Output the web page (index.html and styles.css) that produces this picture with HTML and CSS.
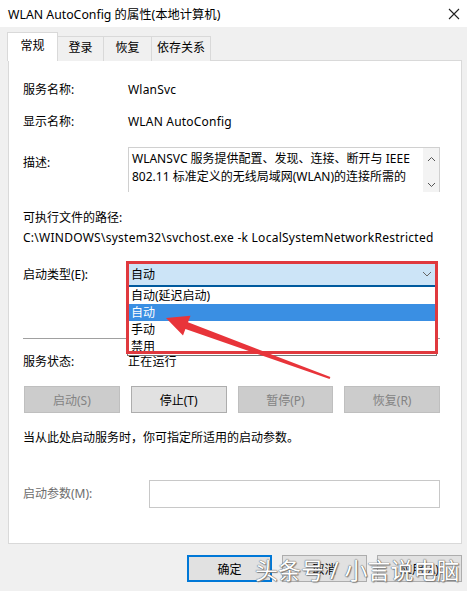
FILE: index.html
```html
<!DOCTYPE html>
<html lang="zh-CN">
<head>
  <meta charset="UTF-8" />
  <title>WLAN AutoConfig 的属性(本地计算机)</title>
  <link rel="stylesheet" href="styles.css">
</head>
<body>
  <div class="window">
    <!-- 标题栏 -->
    <div class="titlebar">
      <span class="title">WLAN AutoConfig 的属性(本地计算机)</span>
      <svg class="close" width="12" height="12" viewBox="0 0 12 12">
        <path d="M1 1L11 11M11 1L1 11" stroke="#222" stroke-width="1.1" fill="none"/>
      </svg>
    </div>

    <div class="body">
      <div class="tabs">
        <div class="tab active">常规</div>
        <div class="tab">登录</div>
        <div class="tab">恢复</div>
        <div class="tab">依存关系</div>
      </div>

      <div class="panel">
        <div class="row r-name">
          <span class="label">服务名称:</span>
          <span class="value">WlanSvc</span>
        </div>
        <div class="row r-display">
          <span class="label">显示名称:</span>
          <span class="value">WLAN AutoConfig</span>
        </div>
        <div class="row r-desc">
          <span class="label desc-label">描述:</span>
          <div class="desc-box">
            <div class="desc-text">WLANSVC 服务提供配置、发现、连接、断开与 IEEE 802.11 标准定义的无线局域网(WLAN)的连接所需的</div>
            <div class="scroll">
              <svg width="9" height="6" viewBox="0 0 9 6"><path d="M1 5L4.5 1.5L8 5" stroke="#555" fill="none"/></svg>
              <svg width="9" height="6" viewBox="0 0 9 6"><path d="M1 1L4.5 4.5L8 1" stroke="#555" fill="none"/></svg>
            </div>
          </div>
        </div>
        <div class="path-label">可执行文件的路径:</div>
        <div class="path">C:\WINDOWS\system32\svchost.exe -k LocalSystemNetworkRestricted</div>

        <div class="row r-start">
          <span class="label">启动类型(E):</span>
          <div class="combo">
            <div class="combo-box">
              <span>自动</span>
              <svg width="10" height="6" viewBox="0 0 10 6"><path d="M1 1L5 5L9 1" stroke="#666" fill="none"/></svg>
            </div>
            <ul class="combo-list">
              <li>自动(延迟启动)</li>
              <li class="selected">自动</li>
              <li>手动</li>
              <li>禁用</li>
            </ul>
            <div class="mark"></div>
          </div>
        </div>

        <hr class="sep">

        <div class="row r-status">
          <span class="label">服务状态:</span>
          <span class="value">正在运行</span>
        </div>

        <div class="actions">
          <button class="btn" disabled>启动(S)</button>
          <button class="btn">停止(T)</button>
          <button class="btn" disabled>暂停(P)</button>
          <button class="btn" disabled>恢复(R)</button>
        </div>

        <p class="hint">当从此处启动服务时，你可指定所适用的启动参数。</p>

        <div class="row r-param">
          <span class="label param-label">启动参数(M):</span>
          <div class="param-input"></div>
        </div>
      </div>

      <div class="footer">
        <button class="btn default">确定</button>
        <button class="btn">取消</button>
        <button class="btn">应用(A)</button>
      </div>
    </div>

    <!-- 标注箭头 -->
    <svg class="arrow" width="467" height="591" viewBox="0 0 467 591">
      <polygon fill="#e8343a" points="166,318 190.5,315.8 188,322.3 330.4,377 329.6,379 185.4,328.9 183,335.4"/>
    </svg>

    <div class="watermark">头条号 / 小言说电脑</div>
  </div>
</body>
</html>
```

FILE: styles.css
```css
:root {
  --gray: #f0f0f0;
  --border: #d9d9d9;
  --btn: #e1e1e1;
  --btn-border: #adadad;
  --blue: #0078d7;
  --red: #e0393e;
}

* {
  box-sizing: border-box;
}

body {
  margin: 0;
  font-family: "Noto Sans", "Noto Sans CJK SC", sans-serif;
  font-size: 12px;
  color: #000;
  background: var(--gray);
}

.window {
  position: relative;
  width: 467px;
  height: 591px;
  overflow: hidden;
  background: var(--gray);
}

.titlebar {
  height: 27px;
  background: #fff;
  display: flex;
  align-items: center;
  justify-content: space-between;
  padding: 0 7px 0 8px;
}

.title {
  font-size: 12.3px;
}

.body {
  padding: 5px 5px 0 7px;
}

.tabs {
  display: flex;
  align-items: flex-end;
  height: 29px;
  margin-bottom: -1px;
  position: relative;
  z-index: 1;
}

.tab {
  height: 25px;
  line-height: 22px;
  padding: 0;
  white-space: nowrap;
  border: 1px solid var(--border);
  border-bottom: none;
  border-left: none;
  background: var(--gray);
  text-align: center;
}

.tab:nth-child(2) { width: 46px; }
.tab:nth-child(3) { width: 48px; }
.tab:nth-child(4) { width: 59px; }

.tab.active {
  width: 51px;
  height: 29px;
  line-height: 26px;
  background: #fff;
  border-left: 1px solid var(--border);
}

.panel {
  width: 454px;
  height: 484px;
  margin-left: 1px;
  background: #fff;
  border: 1px solid var(--border);
  padding: 20px 21px 0 14px;
}

.row {
  display: flex;
  align-items: center;
}

.label {
  width: 105px;
  flex: none;
  line-height: 18px;
}

.value {
  line-height: 18px;
  letter-spacing: 0.2px;
}

.r-display { margin-top: 14px; }

.r-desc {
  margin-top: 16px;
  align-items: flex-start;
}

.desc-label { padding-top: 7px; }

.desc-box {
  width: 312px;
  height: 45px;
  border: 1px solid #d0d0d0;
  border-bottom: none;
  display: flex;
}

.desc-text {
  flex: 1;
  padding: 2px 0 0 3px;
  line-height: 18px;
}

.scroll {
  width: 16px;
  display: flex;
  flex-direction: column;
  justify-content: space-between;
  align-items: center;
  padding: 8px 0 4px;
  background: #f3f3f3;
}

.path-label {
  margin-top: 17px;
  line-height: 18px;
}

.path {
  margin-top: 2px;
  line-height: 18px;
  white-space: nowrap;
  letter-spacing: 0.26px;
}

.r-start { margin-top: 16px; }

.combo {
  position: relative;
  width: 310px;
  margin-left: -1px;
  z-index: 2;
}

.combo-box {
  height: 24px;
  background: #cce4f7;
  border-bottom: 2px solid #005a9e;
  display: flex;
  align-items: center;
  justify-content: space-between;
  padding: 0 5px 0 4px;
}

.combo-list {
  position: absolute;
  left: 0;
  top: 24px;
  width: 310px;
  margin: 0;
  padding: 0;
  list-style: none;
  background: #fff;
  border: 1px solid #767676;
  border-top: none;
}

.combo-list li {
  height: 17px;
  line-height: 17px;
  padding-left: 3px;
}

.combo-list li.selected {
  background: #3a8fe3;
  color: #fff;
}

.mark {
  position: absolute;
  left: -1px;
  top: -2px;
  width: 312px;
  height: 93px;
  border: 3px solid var(--red);
  pointer-events: none;
}

.sep {
  margin: 51px 0 0;
  border: none;
  border-top: 1px solid #a0a0a0;
}

.r-status { margin-top: 14px; }

.actions {
  display: grid;
  grid-template-columns: repeat(4, 1fr);
  column-gap: 11px;
  margin-top: 15px;
  padding-left: 1px;
}

.btn {
  height: 27px;
  font-family: inherit;
  font-size: 12px;
  color: #000;
  background: var(--btn);
  border: 1px solid var(--btn-border);
  padding: 0;
}

.btn:disabled {
  background: #cccccc;
  border-color: #bfbfbf;
  color: #838383;
}

.hint {
  margin: 16px 0 0;
  line-height: 18px;
}

.r-param { margin-top: 33px; }

.param-label {
  width: 126px;
  color: #6d6d6d;
}

.param-input {
  width: 291px;
  height: 28px;
  border: 1px solid #c8c8c8;
}

.footer {
  display: flex;
  justify-content: flex-end;
  gap: 10px;
  margin-top: 11px;
}

.footer .btn {
  width: 85px;
}

.footer .btn.default {
  border: 2px solid var(--blue);
}

.arrow {
  position: absolute;
  left: 0;
  top: 0;
  z-index: 5;
  pointer-events: none;
}

.watermark {
  position: absolute;
  left: 255px;
  top: 555px;
  z-index: 6;
  font-size: 23px;
  line-height: 30px;
  color: #fff;
  text-shadow: 0 0 1px #555, 0 0 1px #555, 1px 1px 1px #888;
}
```
